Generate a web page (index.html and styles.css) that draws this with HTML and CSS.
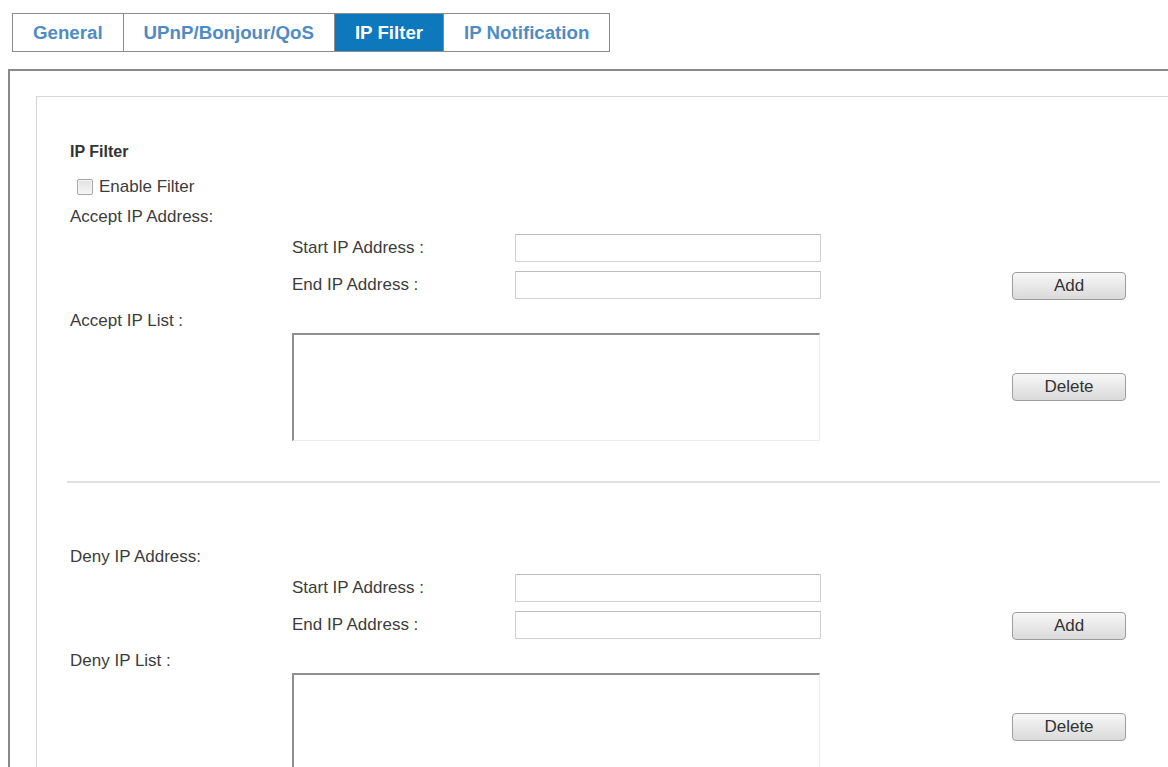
FILE: index.html
```html
<!DOCTYPE html>
<html lang="en">
  <head>
    <link rel="stylesheet" href="styles.css">
    <meta charset="UTF-8" />
    <title>IP Filter</title>
  </head>
  <body>
    <div class="tabs">
      <a class="tab">General</a>
      <a class="tab">UPnP/Bonjour/QoS</a>
      <a class="tab active">IP Filter</a>
      <a class="tab">IP Notification</a>
    </div>
    <div class="frame">
      <div class="panel">
        <h3 class="panel-title">IP Filter</h3>
        <label class="check"><input type="checkbox" id="enableFilter" />Enable Filter</label>

        <div class="ip-block">
          <div class="block-label">Accept IP Address:</div>
          <div class="range-row">
            <span class="field-label">Start IP Address :</span>
            <input class="ip-input" type="text" />
          </div>
          <div class="range-row">
            <span class="field-label">End IP Address :</span>
            <input class="ip-input" type="text" />
            <button class="btn">Add</button>
          </div>
          <div class="block-label list-label">Accept IP List :</div>
          <div class="list-row">
            <textarea class="ip-list"></textarea>
            <button class="btn">Delete</button>
          </div>
        </div>

        <hr class="divider" />

        <div class="ip-block deny">
          <div class="block-label">Deny IP Address:</div>
          <div class="range-row">
            <span class="field-label">Start IP Address :</span>
            <input class="ip-input" type="text" />
          </div>
          <div class="range-row">
            <span class="field-label">End IP Address :</span>
            <input class="ip-input" type="text" />
            <button class="btn">Add</button>
          </div>
          <div class="block-label list-label">Deny IP List :</div>
          <div class="list-row">
            <textarea class="ip-list"></textarea>
            <button class="btn">Delete</button>
          </div>
        </div>
      </div>
    </div>
  </body>
</html>
```

FILE: styles.css
```css
html,
body {
  margin: 0;
  padding: 0;
  height: 100%;
  overflow: hidden;
  background: #ffffff;
}

body {
  font-family: "Liberation Sans", Arial, sans-serif;
  font-size: 17px;
  color: #3c3c3c;
}

/* tab strip */
.tabs {
  display: flex;
  width: fit-content;
  margin: 13px 0 0 12px;
  border: 1px solid #8c8c8c;
}

.tab {
  height: 37px;
  line-height: 37px;
  padding: 0 20px;
  font-size: 18.7px;
  font-weight: bold;
  color: #4f8cc4;
  cursor: pointer;
}

.tab + .tab {
  border-left: 1px solid #8c8c8c;
}

.tab.active {
  background-color: #0d78bc;
  color: #ffffff;
}

/* page frame, clipped at the window bottom */
.frame {
  box-sizing: border-box;
  height: calc(100vh - 69px);
  overflow: hidden;
  margin: 17px 0 0 8px;
  border-top: 2px solid #8a8a8a;
  border-left: 2px solid #8a8a8a;
  padding: 25px 0 0 26px;
}

.panel {
  border-top: 1px solid #d6d6d6;
  border-left: 1px solid #d6d6d6;
  padding: 45px 0 0 33px;
  height: 700px;
}

.panel-title {
  margin: 0;
  font-size: 16px;
  font-weight: bold;
  line-height: 20px;
  color: #333333;
}

.check {
  display: flex;
  align-items: center;
  height: 20px;
  margin-top: 15px;
  padding-left: 7px;
}

.check input {
  -webkit-appearance: none;
  appearance: none;
  width: 16px;
  height: 16px;
  margin: 0 6px 0 0;
  border: 1px solid #a8a8a8;
  border-radius: 2px;
  background: linear-gradient(#e2e2e2, #f6f6f6);
  box-shadow: inset 0 0 0 1px #f4f4f4;
}

.block-label {
  line-height: 20px;
  margin-top: 10px;
}

.list-label {
  margin-top: 12px;
}

.range-row {
  display: flex;
  align-items: center;
  height: 28px;
  margin-top: 7px;
  padding-left: 222px;
}

.range-row + .range-row {
  margin-top: 9px;
}

.field-label {
  width: 223px;
}

.ip-input {
  box-sizing: border-box;
  width: 306px;
  height: 28px;
  border: 1px solid #d2d2d2;
  border-top-color: #bdbdbd;
  background: #ffffff;
}

.list-row {
  display: flex;
  align-items: center;
  margin-top: 2px;
  padding-left: 222px;
}

.ip-list {
  box-sizing: border-box;
  width: 528px;
  height: 108px;
  margin: 0;
  resize: none;
  border-top: 2px solid #8f8f8f;
  border-left: 2px solid #8f8f8f;
  border-right: 1px solid #ececec;
  border-bottom: 1px solid #ececec;
  background: #ffffff;
}

.btn {
  box-sizing: border-box;
  width: 114px;
  height: 28px;
  margin-left: 191px;
  border: 1px solid #9d9d9d;
  border-radius: 4px;
  background: linear-gradient(#f7f7f7, #dadada);
  font-family: "Liberation Sans", Arial, sans-serif;
  font-size: 17px;
  color: #333333;
  cursor: pointer;
}

.range-row .btn {
  margin-top: 2px;
}

.list-row .btn {
  margin-left: 192px;
}

.divider {
  border: 0;
  height: 2px;
  margin: 40px 8px 0 -3px;
  background-color: #e0e0e0;
}

.deny .block-label:first-child {
  margin-top: 64px;
}
```
